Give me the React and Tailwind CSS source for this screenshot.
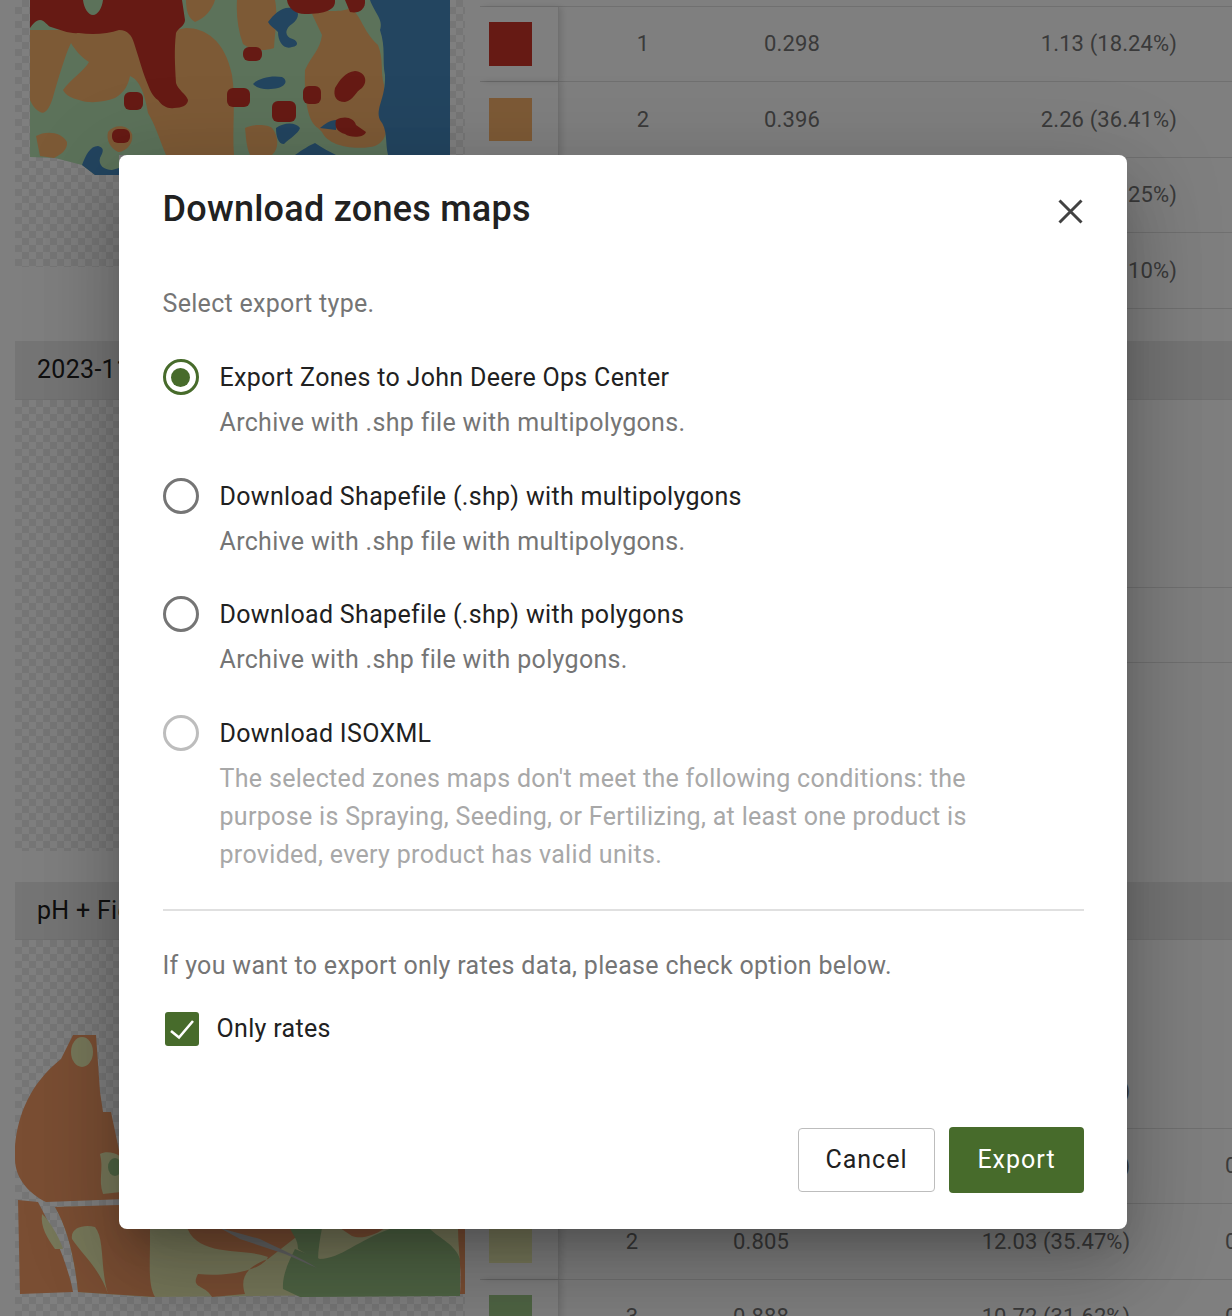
import { useState } from "react";

const font = { fontFamily: "Roboto, sans-serif" };

const options = [
  { id: "jd", label: "Export Zones to John Deere Ops Center", note: ["Archive with .shp file with multipolygons."] },
  { id: "multi", label: "Download Shapefile (.shp) with multipolygons", note: ["Archive with .shp file with multipolygons."] },
  { id: "poly", label: "Download Shapefile (.shp) with polygons", note: ["Archive with .shp file with polygons."] },
  {
    id: "iso",
    label: "Download ISOXML",
    disabled: true,
    note: [
      "The selected zones maps don't meet the following conditions: the",
      "purpose is Spraying, Seeding, or Fertilizing, at least one product is",
      "provided, every product has valid units.",
    ],
  },
];

const checker =
  "bg-[repeating-conic-gradient(#ececec_0_25%,#ffffff_0_50%)] bg-[length:14px_14px]";

const TopMap = () => (
  <svg viewBox="30 0 420 180" className="block w-[420px] h-[180px]">
    <path d="M30 0H450V155H119V175H95L82 165L55 158L30 157Z" fill="#b8e4b4" />
    <path d="M30 30L176 30L186 28C205 28 225 40 232 75C236 100 232 130 234 155H166C158 135 155 125 148 113C145 95 140 80 130 76C128 85 125 92 115 98C104 102 90 104 79 100C72 98 66 96 63 90C70 80 85 70 89 62C82 58 75 50 71 43C65 55 58 80 53 97C50 108 45 115 40 112C36 110 32 105 30 100Z" fill="#fab46c" />
    <path d="M186 0H215C212 10 205 18 195 22C188 18 186 10 186 0Z" fill="#fab46c" />
    <path d="M237 0H275C278 15 275 30 274 48C262 52 252 50 243 44C238 30 236 15 237 0Z" fill="#fab46c" />
    <path d="M312 14C320 8 340 14 350 8C362 16 362 30 378 45C384 60 380 70 384 85C386 100 380 112 386 125C388 135 382 146 370 147C350 150 328 145 322 132L318 128C308 122 304 100 305 70C312 55 320 50 322 35Z" fill="#fab46c" />
    <path d="M245 128C252 124 268 124 272 128C278 135 280 148 272 155H250C246 146 246 136 245 128Z" fill="#fab46c" />
    <path d="M36 136C46 130 62 132 67 142C68 150 60 155 54 158L40 156Z" fill="#fab46c" />
    <path d="M108 132C114 124 128 124 132 134C134 144 125 152 118 152C110 148 106 140 108 132Z" fill="#fab46c" />
    <path d="M450 0H370C374 12 384 20 380 30C386 48 382 60 385 75C386 98 375 108 380 120C388 130 385 142 388 155H450Z" fill="#468ac0" />
    <path d="M268 22C274 14 282 6 292 8C300 10 300 18 292 24C286 28 284 34 290 38C298 40 300 46 292 47C284 50 278 42 278 32C274 28 270 26 268 22Z" fill="#468ac0" />
    <path d="M253 84C258 78 272 75 282 77C288 80 286 86 278 88C270 90 258 90 253 84Z" fill="#468ac0" />
    <path d="M276 128C284 122 296 122 300 128C298 134 290 138 284 144C278 144 276 136 276 128Z" fill="#468ac0" />
    <path d="M320 128C325 124 330 120 336 120V130Z" fill="#468ac0" />
    <path d="M82 165C86 155 90 146 98 146C106 148 102 154 100 158C98 165 104 170 112 170L119 168V175H95Z" fill="#468ac0" />
    <path d="M295 155C302 150 310 145 315 143C322 148 330 152 336 155Z" fill="#468ac0" />
    <path d="M30 28C33 24 36 20 40 20C45 20 47 26 51 27C60 30 70 34 79 33C92 35 108 34 119 30C128 30 132 36 134 43C138 55 142 70 146 80C150 90 152 96 158 100C162 106 168 109 174 108C182 108 188 105 188 100C186 94 178 90 176 83C175 65 174 50 176 33C178 28 185 26 185 20L182 0H103C102 8 98 15 93 15C88 15 84 8 83 0H30Z" fill="#cc3428" />
    <path d="M287 0H335C336 10 325 14 305 14C295 14 288 8 287 0Z" fill="#cc3428" />
    <path d="M345 0H365C366 10 358 14 350 12Z" fill="#cc3428" />
    <rect x="243" y="47" width="19" height="14" rx="6" fill="#cc3428" />
    <rect x="124" y="92" width="19" height="18" rx="6" fill="#cc3428" />
    <rect x="227" y="88" width="23" height="19" rx="6" fill="#cc3428" />
    <rect x="272" y="101" width="24" height="21" rx="6" fill="#cc3428" />
    <rect x="303" y="86" width="18" height="18" rx="6" fill="#cc3428" />
    <path d="M335 88C340 80 345 72 355 71C366 72 368 82 362 88C355 92 354 100 345 102C336 102 333 96 335 88Z" fill="#cc3428" />
    <path d="M336 120C345 115 354 118 356 125L366 132C364 138 350 138 345 134C338 132 334 128 336 120Z" fill="#cc3428" />
    <rect x="112" y="129" width="18" height="14" rx="6" fill="#cc3428" />
  </svg>
);

const BottomMap = () => (
  <svg viewBox="15 1030 450 270" className="block w-[450px] h-[270px]">
    <path d="M73 1036H96L100 1093L103 1113H111L125 1180V1200L46 1203C30 1195 15 1180 15 1160V1147C18 1115 30 1085 61 1060Z" fill="#f49c66" />
    <ellipse cx="82" cy="1053" rx="11" ry="15" fill="#eef0b4" />
    <path d="M100 1155C108 1150 125 1155 130 1170V1192L103 1195C98 1180 104 1170 100 1155Z" fill="#eef0b4" />
    <ellipse cx="115" cy="1168" rx="7" ry="9" fill="#9ec888" />
    <path d="M18 1201L38 1203C50 1225 68 1265 73 1293L20 1295Z" fill="#f49c66" />
    <path d="M42 1215C50 1222 60 1240 63 1250L55 1250C48 1240 40 1228 42 1215Z" fill="#eef0b4" />
    <path d="M55 1208L200 1205L460 1230V1295L150 1298L108 1295L78 1293C75 1262 68 1230 55 1208Z" fill="#eef0b4" />
    <path d="M55 1208L150 1205V1240C150 1268 148 1285 155 1298L108 1295C100 1270 105 1240 95 1228C85 1225 70 1228 72 1240C82 1255 100 1270 108 1295L78 1293C75 1262 68 1230 55 1208Z" fill="#f49c66" />
    <path d="M186 1200H330L300 1235L268 1260C245 1268 240 1280 245 1295L212 1298C205 1285 190 1290 198 1275C225 1278 262 1272 268 1258C245 1248 195 1260 186 1225Z" fill="#f49c66" />
    <path d="M283 1290C282 1275 290 1260 295 1250L320 1260C340 1260 360 1240 390 1230H430C440 1240 455 1245 460 1260V1297L300 1298Z" fill="#9ec888" />
    <path d="M290 1229H322C320 1240 318 1250 318 1262L298 1250C298 1240 292 1235 290 1229Z" fill="#9ec888" />
    <path d="M340 1229H385C372 1238 360 1240 352 1237Z" fill="#f49c66" />
    <path d="M458 1229H465V1295H460C462 1270 458 1250 458 1229Z" fill="#f49c66" />
    <path d="M220 1229L260 1240C280 1250 300 1258 317 1269L285 1255L240 1240Z" fill="#c8c8c8" />
  </svg>
);

const TableRow = ({ color, cells }) => (
  <div className="h-[75.5px] flex items-center border-b border-[#e0e0e0]">
    <div className="w-[79px] shrink-0 h-full pl-[9px] flex items-center shadow-[3px_0_6px_rgba(0,0,0,0.12)] border-r border-[#e0e0e0]">
      {color && <div className={`w-[43px] h-[43.5px] ${color}`} />}
    </div>
    {cells}
  </div>
);

const FirstCells = ({ num, depth, area }) => (
  <>
    <div className="w-[168px] shrink-0 text-center">{num}</div>
    <div className="w-[130px] shrink-0 text-center">{depth}</div>
    <div className="w-[375px] shrink-0 text-right pr-[55px] whitespace-nowrap">{area}</div>
  </>
);

const SecondCells = ({ num, depth, area, rate }) => (
  <>
    <div className="w-[146px] shrink-0 text-center">{num}</div>
    <div className="w-[112px] shrink-0 text-center">{depth}</div>
    <div className="w-[408px] shrink-0 pl-[70px] text-center whitespace-nowrap">{area}</div>
    {rate && <div className="whitespace-nowrap">{rate}</div>}
  </>
);

const SectionHeader = ({ title }) => (
  <div className="ml-[15px] h-[58.5px] bg-[#ebebeb] border-b border-[#e0e0e0] flex items-center pl-[22px] text-[25px] tracking-[0.3px] text-[#212121] whitespace-nowrap">
    {title}
  </div>
);

const Background = () => (
  <div className="text-[22px] tracking-[0.1px] text-[#757575]">
    {/* first zones table, cut off by the top of the window */}
    <div className="h-[341px] flex">
      <div className={`ml-[15px] w-[450px] h-[267px] pl-[15px] ${checker}`}>
        <TopMap />
      </div>
      <div className="ml-[15px] flex-1 pt-[5.5px] overflow-hidden">
        <div className="border-t border-[#e0e0e0]">
          <TableRow color="bg-[#cc3428]" cells={<FirstCells num="1" depth="0.298" area="1.13 (18.24%)" />} />
          <TableRow color="bg-[#fab46c]" cells={<FirstCells num="2" depth="0.396" area="2.26 (36.41%)" />} />
          <TableRow cells={<FirstCells num="3" depth="0.512" area="1.58 (25.25%)" />} />
          <TableRow cells={<FirstCells num="4" depth="0.601" area="1.25 (20.10%)" />} />
        </div>
      </div>
    </div>

    <SectionHeader title="2023-11-02" />
    <div className="h-[482px] flex">
      <div className={`ml-[15px] w-[450px] h-[451px] ${checker}`} />
      <div className="ml-[15px] flex-1 overflow-hidden">
        <div className="h-[188.5px] border-b border-[#e0e0e0]" />
        <div className="h-[75px] border-b border-[#e0e0e0]" />
      </div>
    </div>

    <SectionHeader title="pH + Field" />
    <div className="flex h-[400px]">
      <div className={`ml-[15px] w-[450px] h-[400px] pt-[89px] ${checker}`}>
        <BottomMap />
      </div>
      <div className="ml-[15px] flex-1 overflow-hidden">
        <div className="h-[113px]" />
        <TableRow cells={<SecondCells num="" depth="" area="10.98 (32.38%)" />} />
        <TableRow cells={<SecondCells num="1" depth="0.712" area="10.42 (30.71%)" rate="0.41" />} />
        <TableRow color="bg-[#eef0b4]" cells={<SecondCells num="2" depth="0.805" area="12.03 (35.47%)" rate="0.41" />} />
        <TableRow color="bg-[#9ec888]" cells={<SecondCells num="3" depth="0.888" area="10.72 (31.62%)" rate="0.41" />} />
      </div>
    </div>
  </div>
);

const Radio = ({ checked, disabled }) => (
  <span
    className={`w-[36px] h-[36px] shrink-0 rounded-full border-[3.5px] flex items-center justify-center ${
      checked ? "border-[#476b2b]" : disabled ? "border-[#bdbdbd]" : "border-[#757575]"
    }`}
  >
    {checked && <span className="w-[19px] h-[19px] rounded-full bg-[#476b2b]" />}
  </span>
);

const ExportDialog = () => {
  const [selected, setSelected] = useState("jd");
  const [onlyRates, setOnlyRates] = useState(true);

  return (
    <div className="w-[1008px] h-[1074px] bg-white rounded-[8px] pl-[43.5px] pr-[43px] pt-[30px] pb-[36px] flex flex-col shadow-[0_22px_30px_-14px_rgba(0,0,0,0.2),0_48px_76px_6px_rgba(0,0,0,0.14),0_18px_92px_16px_rgba(0,0,0,0.12)]">
      <div className="flex justify-between items-start">
        <h2 className="text-[36px] leading-[48px] font-medium text-[#212121] tracking-[0.25px]">
          Download zones maps
        </h2>
        <button className="mt-[14px] mr-[1px]">
          <svg width="25" height="25" viewBox="0 0 25 25" className="block">
            <path d="M1.5 1.5L23.5 23.5M23.5 1.5L1.5 23.5" stroke="#424242" strokeWidth="3" fill="none" />
          </svg>
        </button>
      </div>

      <p className="mt-[52px] mb-[36px] text-[25px] leading-[38px] tracking-[0.3px] text-[#757575]">
        Select export type.
      </p>

      <div className="flex flex-col gap-[35.5px]">
        {options.map((opt) => (
          <label
            key={opt.id}
            className="flex cursor-pointer"
            onClick={() => !opt.disabled && setSelected(opt.id)}
          >
            <span className="mr-[21px]">
              <Radio checked={selected === opt.id} disabled={opt.disabled} />
            </span>
            <span>
              <span className="block text-[25px] leading-[38px] tracking-[0.32px] text-[#212121]">{opt.label}</span>
              <span className={`block mt-[7px] text-[25px] leading-[38px] tracking-[0.32px] ${opt.disabled ? "text-[#a8a8a8]" : "text-[#757575]"}`}>
                {opt.note.map((line) => (
                  <span key={line} className="block whitespace-nowrap">{line}</span>
                ))}
              </span>
            </span>
          </label>
        ))}
      </div>

      <div className="mt-[35.5px] h-[2px] bg-[#e0e0e0]" />

      <p className="mt-[36px] text-[25px] leading-[38px] tracking-[0.32px] text-[#757575]">
        If you want to export only rates data, please check option below.
      </p>

      <label className="mt-[25px] ml-[2px] flex items-center cursor-pointer" onClick={() => setOnlyRates(!onlyRates)}>
        <span className={`w-[34px] h-[34px] rounded-[3px] ${onlyRates ? "bg-[#476b2b]" : "border-2 border-[#757575]"}`}>
          {onlyRates && (
            <svg width="34" height="34" viewBox="0 0 34 34" className="block">
              <path d="M6 19L14 25.5L28 9" stroke="#ffffff" strokeWidth="2.6" fill="none" />
            </svg>
          )}
        </span>
        <span className="ml-[18px] text-[25px] leading-[38px] tracking-[0.32px] text-[#212121]">Only rates</span>
      </label>

      <div className="mt-auto flex justify-end items-center gap-[14px]">
        <button className="w-[137px] h-[64px] bg-white border border-[#bdbdbd] rounded-[4px] text-[25px] tracking-[1px] text-[#212121]">
          Cancel
        </button>
        <button className="w-[135px] h-[66px] bg-[#476b2b] rounded-[4px] text-[25px] tracking-[1px] text-white">
          Export
        </button>
      </div>
    </div>
  );
};

export default function App() {
  return (
    <div style={font} className="relative h-screen overflow-hidden bg-white">
      <Background />
      <div className="absolute inset-0 bg-black/50 pt-[155px] pl-[119px]">
        <ExportDialog />
      </div>
    </div>
  );
}
